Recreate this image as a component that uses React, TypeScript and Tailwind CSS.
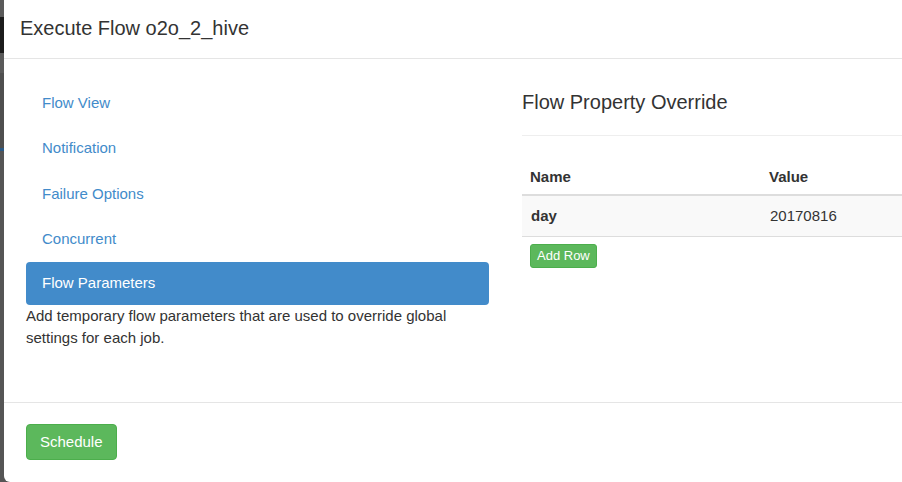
import React from "react";

const font = { fontFamily: '"Liberation Sans", Arial, Helvetica, sans-serif' };

export default function App() {
  const items = ["Flow View", "Notification", "Failure Options", "Concurrent"];
  return (
    <div className="w-[902px] h-[482px] overflow-hidden flex bg-[#555555]" style={font}>
      <div className="w-[4px] shrink-0 flex flex-col">
        <div className="h-[17px] bg-[#5a5a5a]" />
        <div className="h-[36px] bg-[#1c1c1c]" />
        <div className="h-[20px] bg-[#5a5a5a]" />
        <div className="h-[75px] bg-[#4f4f4f]" />
        <div className="h-[3px] bg-[#2a5a86]" />
        <div className="flex-1 bg-[#555555]" />
      </div>
      <div className="w-[940px] shrink-0 h-[482px] bg-white rounded-bl-[6px] flex flex-col">
        <div className="h-[59px] border-b border-[#e5e5e5] pl-[16px] flex items-center shrink-0">
          <span className="text-[20px] text-[#333333] leading-none -mt-[3px]">Execute Flow o2o_2_hive</span>
        </div>
        <div className="h-[343px] flex shrink-0">
          <div className="w-[485px] pl-[22px] pt-[22px] shrink-0">
            <div className="w-[463px] flex flex-col">
              {items.map((t, i) => (
                <div
                  key={t}
                  className={
                    "h-[43px] pl-[16px] flex items-center text-[15px] text-[#428bca] " +
                    (i === 0 ? "mt-[1px]" : i === 2 ? "mt-[3px]" : "mt-[2px]")
                  }
                >
                  {t}
                </div>
              ))}
              <div className="h-[43px] mt-[1px] pl-[16px] flex items-center text-[15px] text-white bg-[#428bca] rounded-[4px]">
                Flow Parameters
              </div>
            </div>
            <p className="text-[15px] leading-[22px] text-[#333333] w-[440px]">
              Add temporary flow parameters that are used to override global settings for each job.
            </p>
          </div>
          <div className="pl-[33px] pt-[22px] flex-1">
            <div className="h-[42px] flex items-center text-[20px] text-[#333333]">Flow Property Override</div>
            <div className="h-[1px] bg-[#eeeeee] mt-[12px]" />
            <div className="mt-[21px]">
              <div className="h-[39px] pt-[3px] flex items-center border-b-2 border-[#dddddd] text-[15px] font-bold text-[#333333]">
                <div className="w-[247px] pl-[8px]">Name</div>
                <div>Value</div>
              </div>
              <div className="h-[41px] flex items-center border-b border-[#dddddd] bg-[#f9f9f9] text-[15px] text-[#333333]">
                <div className="w-[248px] pl-[9px] font-bold">day</div>
                <div>20170816</div>
              </div>
              <div className="pl-[8px] pt-[6px]">
                <div className="inline-flex items-center h-[24px] px-[6px] text-[13px] text-white bg-[#5cb85c] border border-[#4cae4c] rounded-[3px]">
                  Add Row
                </div>
              </div>
            </div>
          </div>
        </div>
        <div className="border-t border-[#e5e5e5] pl-[22px] pt-[21px]">
          <div className="inline-flex items-center h-[36px] px-[13px] text-[15px] text-white bg-[#5cb85c] border border-[#4cae4c] rounded-[4px]">
            Schedule
          </div>
        </div>
      </div>
    </div>
  );
}
